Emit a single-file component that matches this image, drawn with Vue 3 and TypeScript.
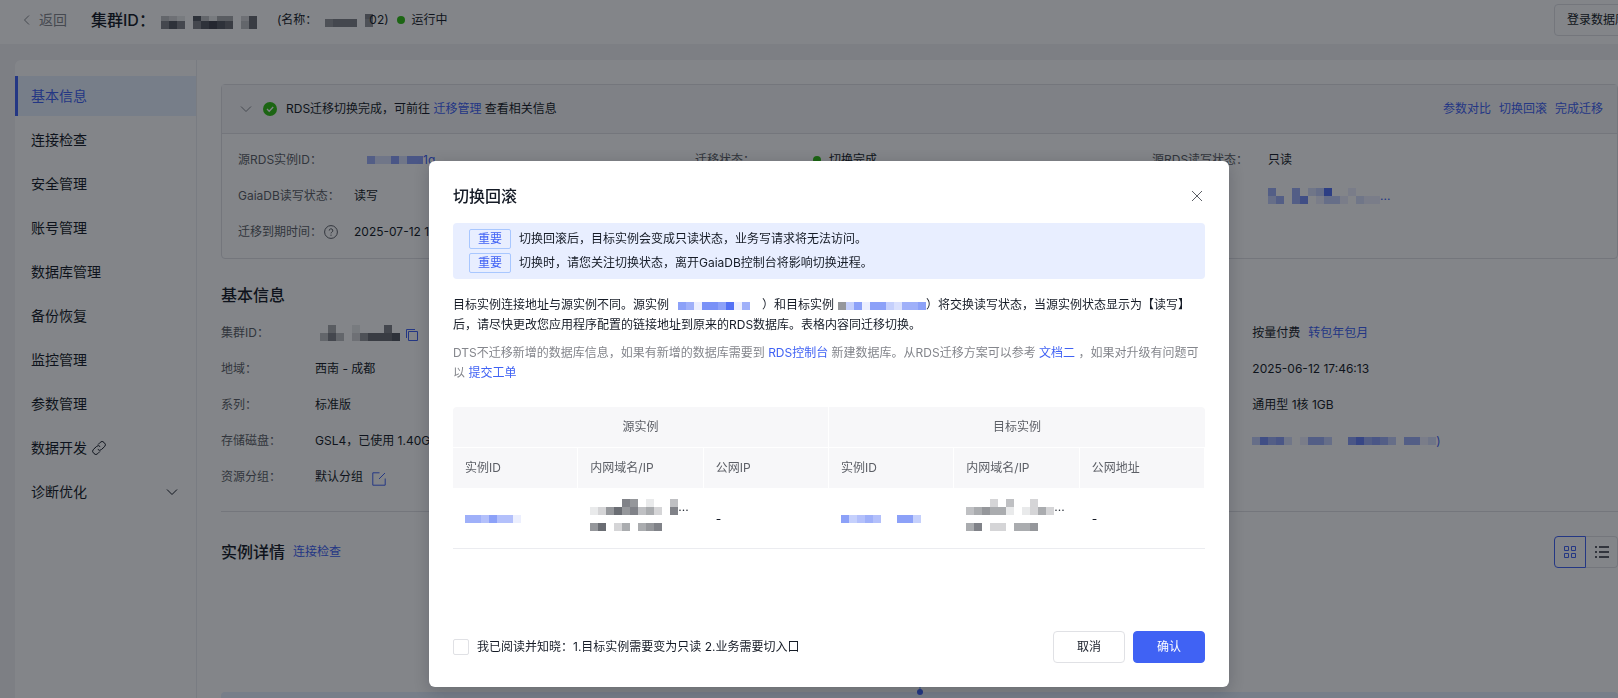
<script setup lang="ts">
import { h, ref, type FunctionalComponent } from 'vue'

interface MosaicProps {
  rows: string[]
  heights?: number[]
  tone?: 'dark' | 'blue'
}

// Masked value: every digit is the strength of one 8px cell.
const Mosaic: FunctionalComponent<MosaicProps> = (props) => {
  const heights = props.heights ?? props.rows.map(() => 8)
  const width = Math.max(...props.rows.map((r) => r.length)) * 8
  const total = heights.reduce((a, b) => a + b, 0)
  const fill = props.tone === 'blue' ? '#4062f4' : '#2b2f38'
  let y = 0
  const cells = props.rows.flatMap((row, i) => {
    const top = y
    y += heights[i]
    return [...row].map((c, j) =>
      h('rect', { x: j * 8, y: top, width: 8, height: heights[i], fill, 'fill-opacity': Number(c) / 10 })
    )
  })
  return h(
    'svg',
    { class: 'mosaic', width, height: total, viewBox: `0 0 ${width} ${total}`, 'aria-hidden': 'true', 'shape-rendering': 'crispEdges' },
    cells
  )
}
Mosaic.props = ['rows', 'heights', 'tone']

const menu = [
  { label: '基本信息' },
  { label: '连接检查' },
  { label: '安全管理' },
  { label: '账号管理' },
  { label: '数据库管理' },
  { label: '备份恢复' },
  { label: '监控管理' },
  { label: '参数管理' },
  { label: '数据开发', icon: 'link' },
  { label: '诊断优化', icon: 'arrow' }
]
const active = ref('基本信息')
const agreed = ref(false)
const view = ref<'grid' | 'list'>('grid')
const notices = [
  '切换回滚后，目标实例会变成只读状态，业务写请求将无法访问。',
  '切换时，请您关注切换状态，离开GaiaDB控制台将影响切换进程。'
]
const columns = ['实例ID', '内网域名/IP', '公网IP', '实例ID', '内网域名/IP', '公网地址']
</script>

<template>
  <div class="page">
    <header class="topbar">
      <a class="back" href="#">
        <svg width="8" height="12" viewBox="0 0 8 12"><path d="M6 1.5 1.5 6 6 10.5" /></svg>
        返回
      </a>
      <h1>集群ID：</h1>
      <Mosaic class="head-id" :rows="['321083144027', '686068987037']" :heights="[5, 8]" />
      <span class="cluster-name">(名称：<Mosaic class="name-mask" :rows="['0000006', '0566605']" :heights="[5, 8]" />02)</span>
      <span class="state"><i class="dot"></i>运行中</span>
      <button class="btn login" type="button">登录数据库</button>
    </header>

    <div class="panel">
      <nav class="side">
        <a v-for="m in menu" :key="m.label" href="#" :class="{ on: m.label === active }" @click.prevent="active = m.label">
          {{ m.label }}
          <svg v-if="m.icon === 'link'" class="link-icon" width="14" height="14" viewBox="0 0 14 14">
            <path d="M6 3.6 8.2 1.4a2.6 2.6 0 0 1 3.8 0l.5.5a2.6 2.6 0 0 1 0 3.8L9.6 8.4a2.6 2.6 0 0 1-3.8 0M8 10.4l-2.2 2.2a2.6 2.6 0 0 1-3.8 0l-.5-.5a2.6 2.6 0 0 1 0-3.8l2.9-2.7a2.6 2.6 0 0 1 3.8 0" />
          </svg>
          <svg v-if="m.icon === 'arrow'" class="arrow" width="12" height="8" viewBox="0 0 12 8"><path d="m1 1.5 5 5 5-5" /></svg>
        </a>
      </nav>

      <main>
        <section class="status">
          <div class="status-head">
            <svg class="fold" width="12" height="8" viewBox="0 0 12 8"><path d="m1 1.5 5 5 5-5" /></svg>
            <svg class="ok" width="14" height="14" viewBox="0 0 14 14">
              <circle cx="7" cy="7" r="7" fill="#30bf13" /><path d="m4 7 2.2 2.2L10.2 5" fill="none" stroke="#fff" stroke-width="1.3" />
            </svg>
            <span>RDS迁移切换完成，可前往 <a href="#">迁移管理</a> 查看相关信息</span>
            <div class="actions"><a href="#">参数对比</a><a href="#">切换回滚</a><a href="#">完成迁移</a></div>
          </div>
          <div class="status-grid">
            <div class="field">
              <span class="label">源RDS实例ID：</span>
              <a class="masked inset" href="#"><Mosaic tone="blue" :rows="['05226266']" />1g</a>
            </div>
            <div class="field"><span class="label">迁移状态：</span><span class="state"><i class="dot"></i>切换完成</span></div>
            <div class="field"><span class="label">源RDS读写状态：</span><span>只读</span></div>
            <div class="field"><span class="label">GaiaDB读写状态：</span><span>读写</span></div>
            <div class="field third">
              <span class="label"></span>
              <a class="masked" href="#"><Mosaic tone="blue" :rows="['50050239001000', '35057013310211']" />...</a>
            </div>
            <div class="field">
              <span class="label">迁移到期时间：
                <svg class="help" width="14" height="14" viewBox="0 0 14 14">
                  <circle cx="7" cy="7" r="6.4" /><path d="M5.2 5.6a1.8 1.8 0 1 1 2.6 1.6c-.6.3-.8.6-.8 1.2" /><path d="M7 9.6v1.2" />
                </svg>
              </span>
              <span>2025-07-12 17:46:13</span>
            </div>
          </div>
        </section>

        <section class="basic">
          <h2>基本信息</h2>
          <div class="basic-grid">
            <div class="field">
              <span class="label">集群ID：</span>
              <span class="masked inset">
                <Mosaic :rows="['0400100060', '3630257778']" />
                <svg class="copy" width="12" height="12" viewBox="0 0 12 12"><path d="M2.5 2.5h9v9h-9zM.5 9V.5H9" /></svg>
              </span>
            </div>
            <div class="field third"><span class="label"></span><span>按量付费<a class="after" href="#">转包年包月</a></span></div>
            <div class="field"><span class="label">地域：</span><span>西南 - 成都</span></div>
            <div class="field third"><span class="label"></span><span>2025-06-12 17:46:13</span></div>
            <div class="field"><span class="label">系列：</span><span>标准版</span></div>
            <div class="field third"><span class="label"></span><span>通用型 1核 1GB</span></div>
            <div class="field"><span class="label">存储磁盘：</span><span>GSL4，已使用 1.40GB</span></div>
            <div class="field third">
              <span class="label"></span>
              <a class="masked" href="#"><Mosaic tone="blue" :rows="['37562015530068565305512']" />)</a>
            </div>
            <div class="field">
              <span class="label">资源分组：</span>
              <span class="masked">默认分组
                <svg class="edit" width="14" height="14" viewBox="0 0 14 14"><path d="M7.5.8H.8v12.4h12.4V6.5M7 7l6-6" /></svg>
              </span>
            </div>
          </div>
        </section>

        <section class="detail">
          <div class="detail-head">
            <h2>实例详情</h2>
            <a href="#">连接检查</a>
            <div class="views">
              <button type="button" aria-label="卡片" :class="{ on: view === 'grid' }" @click="view = 'grid'">
                <svg width="14" height="14" viewBox="0 0 14 14"><path d="M1.5 1.5h4v4h-4zM8.5 1.5h4v4h-4zM1.5 8.5h4v4h-4zM8.5 8.5h4v4h-4z" /></svg>
              </button>
              <button type="button" aria-label="列表" :class="{ on: view === 'list' }" @click="view = 'list'">
                <svg width="14" height="14" viewBox="0 0 14 14" stroke-width="2"><path d="M4 2h10M4 7h10M4 12h10M0 2h2M0 7h2M0 12h2" /></svg>
              </button>
            </div>
          </div>
          <div class="topology"><i class="stem"></i><i class="node"></i></div>
        </section>
      </main>
    </div>

    <div class="overlay">
      <div class="modal" role="dialog" aria-modal="true" aria-labelledby="dialog-title">
        <div class="modal-head">
          <h2 id="dialog-title">切换回滚</h2>
          <button class="close" type="button" aria-label="关闭">
            <svg width="12" height="12" viewBox="0 0 12 12"><path d="m1 1 10 10M11 1 1 11" /></svg>
          </button>
        </div>
        <ul class="notice">
          <li v-for="n in notices" :key="n"><b>重要</b>{{ n }}</li>
        </ul>
        <p class="text">目标实例连接地址与源实例不同。源实例<Mosaic class="gap-a" tone="blue" :rows="['651776915']" />）和目标实例<span class="pair"><Mosaic :rows="['5']" /><Mosaic tone="blue" :rows="['3616632556']" /></span>）将交换读写状态，当源实例状态显示为【读写】后，请尽快更改您应用程序配置的链接地址到原来的RDS数据库。表格内容同迁移切换。</p>
        <p class="text soft">DTS不迁移新增的数据库信息，如果有新增的数据库需要到 <a href="#">RDS控制台</a> 新建数据库。从RDS迁移方案可以参考 <a href="#">文档二</a> ，如果对升级有问题可以 <a href="#">提交工单</a></p>
        <table>
          <thead>
            <tr><th colspan="3">源实例</th><th colspan="3">目标实例</th></tr>
            <tr><th v-for="(c, i) in columns" :key="i">{{ c }}</th></tr>
          </thead>
          <tbody>
            <tr>
              <td><Mosaic tone="blue" :rows="['5546441']" /></td>
              <td class="hosts">
                <div class="host"><Mosaic :rows="['00006501003', '12575634206']" />...</div>
                <div class="host"><Mosaic :rows="['570240456']" /></div>
              </td>
              <td>-</td>
              <td><Mosaic tone="blue" :rows="['6345400663']" /></td>
              <td class="hosts">
                <div class="host"><Mosaic :rows="['00020300200', '34544101242']" />...</div>
                <div class="host"><Mosaic :rows="['460220445']" /></div>
              </td>
              <td>-</td>
            </tr>
          </tbody>
        </table>
        <div class="modal-foot">
          <label><input v-model="agreed" type="checkbox" />我已阅读并知晓：1.目标实例需要变为只读 2.业务需要切入口</label>
          <button class="btn" type="button">取消</button>
          <button class="btn primary" type="button">确认</button>
        </div>
      </div>
    </div>
  </div>
</template>

<style>
html,
body {
  margin: 0;
}
</style>

<style scoped>
.page {
  height: 100vh;
  overflow: hidden;
  display: flex;
  flex-direction: column;
  background: #f2f2f5;
  color: #151b26;
  font: 12px/20px Inter, "Noto Sans CJK SC", sans-serif;
}
.page * {
  box-sizing: border-box;
}
h1,
h2,
p,
ul {
  margin: 0;
  padding: 0;
  list-style: none;
}
h1,
h2 {
  font-size: 16px;
  line-height: 24px;
  font-weight: 500;
}
a {
  color: #4062f4;
  text-decoration: none;
}
svg {
  flex: none;
  fill: none;
  stroke: currentColor;
}
.mosaic {
  stroke: none;
  vertical-align: middle;
}
.dot {
  width: 8px;
  height: 8px;
  border-radius: 50%;
  background: #30bf13;
}
.state {
  display: flex;
  align-items: center;
  gap: 7px;
}
.status-grid .state {
  gap: 8px;
  padding-left: 2px;
}
.btn {
  height: 32px;
  width: 72px;
  padding: 0;
  border: 1px solid #e0e1e5;
  border-radius: 4px;
  background: #fff;
  color: #151b26;
  font: inherit;
}
.btn.primary {
  border-color: #4062f4;
  background: #4062f4;
  color: #fff;
}
.topbar {
  flex: none;
  display: flex;
  align-items: center;
  height: 44px;
  margin-right: -22px;
  padding: 0 0 4px 23px;
  background: #fff;
}
.back {
  display: flex;
  align-items: center;
  gap: 8px;
  margin-right: 24px;
  color: #84868c;
  font-size: 14px;
}
.head-id {
  margin: 4px 20px 0 6px;
}
.name-mask {
  margin-right: -4px;
}
.cluster-name {
  margin-right: 8px;
}
.login {
  width: 86px;
  margin-left: auto;
}
.panel {
  flex: 1;
  display: flex;
  margin: 16px 0 0 15px;
  border-radius: 6px 0 0 0;
  background: #fff;
}
.side {
  flex: none;
  width: 182px;
  padding-top: 16px;
  border-right: 1px solid #ebecf0;
}
.side a {
  display: flex;
  align-items: center;
  height: 40px;
  margin-bottom: 4px;
  padding: 0 18px 0 13px;
  border-left: 3px solid transparent;
  color: #151b26;
  font-size: 14px;
}
.side a.on {
  border-color: #4062f4;
  background: #e6f0ff;
  color: #4062f4;
}
.link-icon {
  margin-left: 5px;
}
.arrow {
  margin-left: auto;
}
main {
  flex: 1;
  min-width: 0;
  padding: 24px 0 0 24px;
}
.status {
  border: 1px solid #e0e1e5;
  border-radius: 4px;
}
.status-head {
  display: flex;
  align-items: center;
  height: 49px;
  padding: 0 14px 0 18px;
  border-bottom: 1px solid #e0e1e5;
  background: #f7f7f9;
}
.fold {
  color: #84868c;
}
.ok {
  margin: 0 9px 0 11px;
  stroke: none;
}
.actions {
  display: flex;
  gap: 8px;
  margin-left: auto;
}
.status-grid {
  display: grid;
  grid-template-columns: repeat(3, 1fr);
  row-gap: 16px;
  padding: 16px 8px 16px 16px;
}
.field {
  display: flex;
  height: 20px;
}
.status-grid .label {
  width: 116px;
}
.label {
  flex: none;
  display: flex;
  align-items: center;
  gap: 2px;
  width: 94px;
  color: #5c5f66;
}
.third {
  grid-column: 3;
}
.masked {
  display: flex;
  align-items: center;
}
.inset {
  padding-left: 5px;
}
.copy {
  margin: 3px 0 0 6px;
  color: #4062f4;
}
.edit {
  margin: 3px 0 0 9px;
  color: #4062f4;
}
.after {
  margin-left: 8px;
}
.basic {
  padding: 24px 0;
  border-bottom: 1px solid #e0e1e5;
}
.basic-grid {
  display: grid;
  grid-template-columns: repeat(3, 1fr);
  row-gap: 16px;
  margin-top: 16px;
}
.basic-grid .third .label {
  width: 100px;
}
.detail-head {
  display: flex;
  align-items: center;
  gap: 8px;
  height: 32px;
  margin: 24px 0 124px;
}
.views {
  display: flex;
  margin-left: auto;
}
.views button {
  display: flex;
  align-items: center;
  justify-content: center;
  width: 32px;
  height: 32px;
  padding: 0;
  border: 1px solid #e0e1e5;
  background: #fff;
  color: #5c5f66;
}
.views button:first-child {
  border-radius: 4px 0 0 4px;
}
.views button:last-child {
  border-left: 0;
  border-radius: 0 4px 4px 0;
}
.views .on {
  border: 1px solid #4062f4;
  color: #4062f4;
}
.topology {
  position: relative;
  height: 80px;
  border-radius: 4px;
  background: #e6f0ff;
}
.node,
.stem {
  position: absolute;
  left: 50%;
  top: -3px;
  width: 6px;
  height: 6px;
  margin-left: -3px;
  border-radius: 50%;
  background: #4062f4;
}
.stem {
  top: -8px;
  width: 2px;
  margin-left: -1px;
  border-radius: 0;
  background: #a8c7ff;
}
.overlay {
  position: fixed;
  inset: 0;
  display: flex;
  align-items: flex-start;
  justify-content: center;
  padding: 161px 0 0 40px;
  background: rgba(7, 12, 20, 0.5);
}
.modal {
  width: 800px;
  padding: 23px 24px 24px;
  border-radius: 6px;
  background: #fff;
  box-shadow: 0 4px 16px rgba(7, 12, 20, 0.2);
}
.modal-head {
  display: flex;
  align-items: center;
  justify-content: space-between;
  margin-bottom: 15px;
}
.close {
  display: flex;
  padding: 2px;
  border: 0;
  background: none;
  color: #5c5f66;
}
.notice {
  display: grid;
  gap: 4px;
  margin-bottom: 16px;
  padding: 6px 16px;
  border-radius: 4px;
  background: #e8eeff;
}
.notice li {
  display: flex;
  align-items: center;
}
.notice b {
  width: 42px;
  height: 20px;
  margin-right: 8px;
  border: 1px solid #a8c7ff;
  border-radius: 2px;
  color: #4062f4;
  font-weight: 400;
  line-height: 18px;
  text-align: center;
}
.text {
  margin-bottom: 8px;
}
.soft {
  color: #84868c;
}
.gap-a {
  margin: 0 12px 0 9px;
}
.pair {
  margin-left: 4px;
}
table {
  width: 100%;
  margin-top: 24px;
  table-layout: fixed;
  border-collapse: separate;
  border-spacing: 0;
}
th {
  height: 41px;
  padding: 0 12px;
  border-right: 1px solid #fff;
  border-bottom: 1px solid #fff;
  background: #f7f7f9;
  color: #5c5f66;
  font-weight: 400;
  text-align: left;
}
th[colspan] {
  text-align: center;
}
th[colspan]:first-child {
  border-top-left-radius: 4px;
}
th[colspan]:last-child {
  border-right: 0;
  border-top-right-radius: 4px;
}
td {
  height: 60px;
  padding: 0 12px;
  border-bottom: 1px solid #ebecf0;
}
.hosts {
  padding-bottom: 8px;
}
.host {
  display: flex;
  align-items: center;
  line-height: 16px;
}
.host + .host {
  margin-top: 8px;
}
.modal-foot {
  display: flex;
  align-items: center;
  gap: 8px;
  margin-top: 82px;
}
.modal-foot label {
  display: flex;
  align-items: center;
  gap: 8px;
  margin-right: auto;
}
input {
  appearance: none;
  width: 16px;
  height: 16px;
  margin: 0;
  border: 1px solid #e0e1e5;
  border-radius: 2px;
  background: #fff;
}
input:checked {
  border-color: #4062f4;
  background: #4062f4;
}
</style>
